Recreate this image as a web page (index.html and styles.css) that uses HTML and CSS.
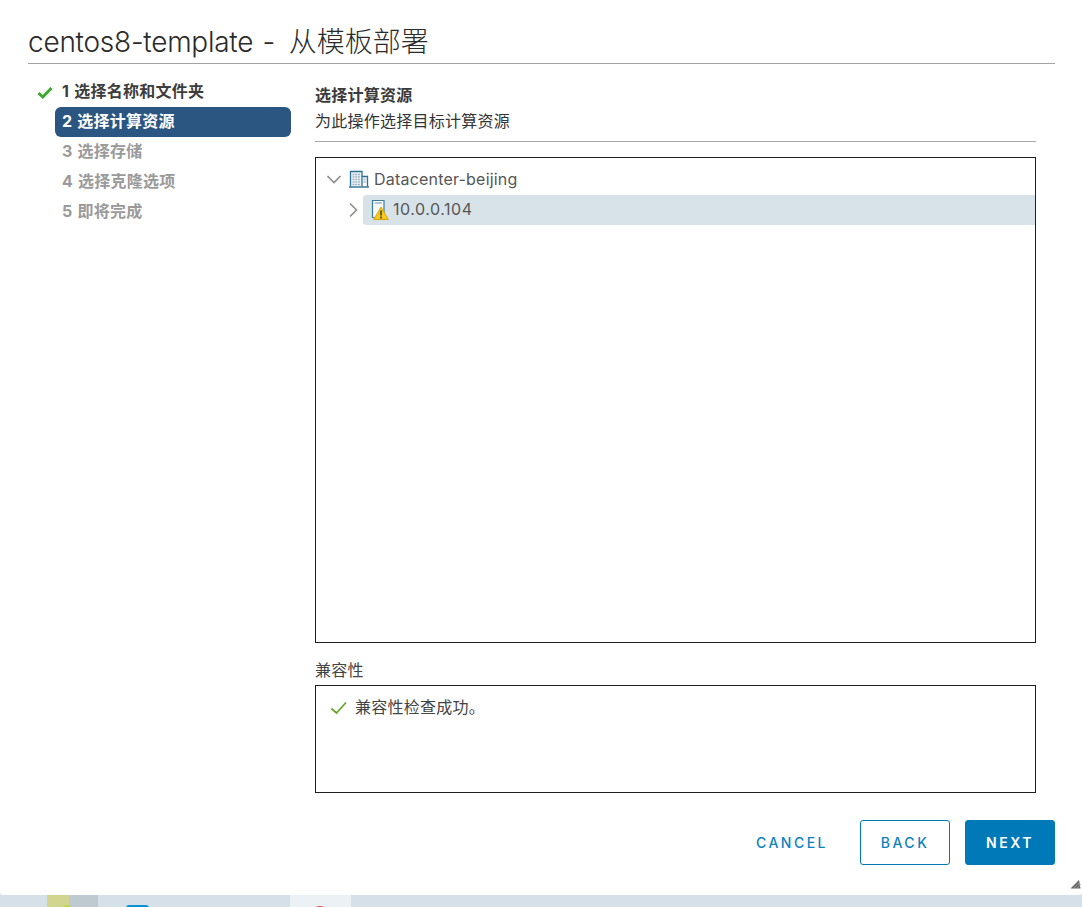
FILE: index.html
```html
<!DOCTYPE html>
<html lang="zh">
<head>
<meta charset="utf-8">
<title>centos8-template - 从模板部署</title>
<link rel="stylesheet" href="styles.css">
</head>
<body>
<div class="modal">
  <h1 class="title"><span class="title-name">centos8-template</span> <span class="title-dash">-</span> 从模板部署</h1>
  <div class="wizard">
    <nav class="steps">
      <div class="step done">
        <svg class="step-check" width="16" height="13" viewBox="0 0 16 13"><path d="M1.5 7 L5.8 11 L14.5 2" fill="none" stroke="#3dab2f" stroke-width="3"/></svg>
        <span class="step-label">1 选择名称和文件夹</span>
      </div>
      <div class="step active"><span class="step-label">2 选择计算资源</span></div>
      <div class="step off"><span class="step-label">3 选择存储</span></div>
      <div class="step off"><span class="step-label">4 选择克隆选项</span></div>
      <div class="step off"><span class="step-label">5 即将完成</span></div>
    </nav>
    <main class="content">
      <header class="head">
        <div class="head-title">选择计算资源</div>
        <div class="head-sub">为此操作选择目标计算资源</div>
      </header>
      <div class="tree">
        <div class="node root">
          <svg class="caret" width="16" height="16" viewBox="0 0 16 16"><path d="M1.5 5 L8 11.5 L14.5 5" fill="none" stroke="#8c8c8c" stroke-width="1.6"/></svg>
          <svg class="icon-dc" width="20" height="18" viewBox="0 0 20 18">
            <path d="M1.5 16.5 V1.5 H13 V16.5" fill="#f0f4f7" stroke="#2f6f92" stroke-width="1.3"/>
            <path d="M13 6.5 H18.5 V16.5" fill="#f0f4f7" stroke="#2f6f92" stroke-width="1.3"/>
            <path d="M0 17 H20" stroke="#2f6f92" stroke-width="1.4"/>
            <path d="M3.5 4.5 H11 M3.5 7 H11 M3.5 9.5 H11 M3.5 12 H11 M3.5 14.5 H11 M14.5 9.5 H17 M14.5 12 H17" stroke="#9fb6c6" stroke-width="1.3" stroke-dasharray="2 0.7"/>
          </svg>
          <span class="node-text">Datacenter-beijing</span>
        </div>
        <div class="node child">
          <svg class="caret" width="10" height="16" viewBox="0 0 10 16"><path d="M2 1.5 L8.5 8 L2 14.5" fill="none" stroke="#8c8c8c" stroke-width="1.6"/></svg>
          <div class="node-sel">
            <svg class="icon-host" width="20" height="22" viewBox="0 0 20 22">
              <path d="M2.5 1.5 H14 V18.5 H2.5 Z" fill="#f7f9fb" stroke="#3f7c9c" stroke-width="1.2"/>
              <path d="M4.5 4 H12" stroke="#9fb6c6" stroke-width="1.5"/>
              <path d="M11 8 L18.3 20.5 H3.7 Z" fill="#f7c81e" stroke="#d9a406" stroke-width="1" stroke-linejoin="round"/>
              <path d="M11 11.5 V16.5 M11 17.4 V19.4" stroke="#33302a" stroke-width="1.4"/>
            </svg>
            <span class="node-text host-text">10.0.0.104</span>
          </div>
        </div>
      </div>
      <div class="compat-label">兼容性</div>
      <div class="compat">
        <svg class="compat-check" width="18" height="14" viewBox="0 0 18 14"><path d="M1.5 7.5 L6.5 12 L16 1.5" fill="none" stroke="#62a62c" stroke-width="1.7"/></svg>
        <span>兼容性检查成功。</span>
      </div>
    </main>
  </div>
  <footer class="actions">
    <button class="btn link">CANCEL</button>
    <button class="btn outline">BACK</button>
    <button class="btn solid">NEXT</button>
  </footer>
  <svg class="resize" width="11" height="10" viewBox="0 0 11 10"><path d="M0.5 9.5 L9 1 L10.5 9.5 Z" fill="#6a6a6a"/><path d="M3 10 L10 3 M6 10 L11 5" stroke="#a0a0a0" stroke-width="0.7"/></svg>
</div>
<div class="backdrop">
  <div class="seg seg-a"></div>
  <div class="seg seg-b"></div>
  <div class="seg seg-c"></div>
  <span class="dot dot-green"></span>
  <span class="dot dot-blue"></span>
  <span class="dot dot-red"></span>
</div>
</body>
</html>
```
FILE: styles.css
```css
* { box-sizing: border-box; }
html, body { margin: 0; padding: 0; }
body {
  width: 1082px;
  height: 907px;
  overflow: hidden;
  background: #d5e0e8;
  font-family: "Inter", "Noto Sans CJK SC", sans-serif;
  color: #333;
}
.modal {
  position: relative;
  height: 895px;
  background: #fff;
  padding: 0 27px 0 28px;
  display: flex;
  flex-direction: column;
  border-radius: 0 0 3px 3px;
}
.title {
  margin: 0;
  height: 64px;
  padding-top: 24px;
  border-bottom: 1px solid #a3a3a3;
  font-size: 28px;
  font-weight: 300;
  line-height: 36px;
  word-spacing: 1.5px;
  color: #2b2b2b;
}
.title-name { letter-spacing: -0.25px; }
.title-dash { margin-right: 4px; }
.wizard { display: flex; }
.steps {
  width: 263px;
  padding: 13px 0 0 27px;
  flex: none;
}
.step {
  position: relative;
  height: 30px;
  display: flex;
  align-items: center;
  padding: 0 0 4px 7px;
  font-size: 16px;
  font-weight: 700;
  letter-spacing: 0.25px;
  word-spacing: 1px;
}
.step-check { position: absolute; left: -18px; top: 9px; }
.step.done { color: #3d3d3d; }
.step.active { background: #2b5681; color: #fff; border-radius: 6px; }
.step.off { color: #9a9a9a; }
.content {
  width: 721px;
  margin-left: 24px;
  flex: none;
}
.head {
  height: 78px;
  padding-top: 20px;
  border-bottom: 1px solid #a8a8a8;
  letter-spacing: 0.25px;
}
.head-title { font-size: 16px; font-weight: 700; line-height: 22px; color: #3a3a3a; }
.head-sub { font-size: 16px; line-height: 22px; margin-top: 4px; color: #333; }
.tree {
  margin-top: 15px;
  height: 486px;
  border: 1px solid #1f1f1f;
  padding-top: 7px;
}
.node { display: flex; align-items: center; height: 30px; }
.root { padding: 0 0 2px 10px; }
.child { padding-left: 32px; }
.caret { flex: none; }
.icon-dc { margin-left: 7px; flex: none; }
.node-text { font-size: 16px; letter-spacing: 0.2px; color: #565656; }
.host-text { letter-spacing: 0.55px; padding-bottom: 2px; }
.root .node-text { margin-left: 5px; }
.node-sel {
  flex: 1;
  height: 30px;
  margin-left: 5px;
  padding-left: 7px;
  display: flex;
  align-items: center;
  gap: 3px;
  background: #d8e3e9;
  border-radius: 3px 0 0 3px;
}
.compat-label { margin-top: 16px; font-size: 16px; letter-spacing: 0.25px; line-height: 22px; color: #444; }
.compat {
  margin-top: 4px;
  height: 108px;
  border: 1px solid #1f1f1f;
  padding: 10px 0 0 14px;
  display: flex;
  align-items: flex-start;
  gap: 7px;
  font-size: 16px;
  letter-spacing: 0.25px;
  line-height: 22px;
  color: #444;
}
.compat-check { margin-top: 5px; flex: none; }
.actions {
  margin-top: 27px;
  display: flex;
  justify-content: flex-end;
}
.btn {
  height: 45px;
  width: 90px;
  border-radius: 3px;
  font-family: "Inter", sans-serif;
  font-size: 14px;
  font-weight: 500;
  letter-spacing: 2.5px;
  padding: 0;
  border: 1px solid #0079b8;
}
.link { background: none; border-color: transparent; color: #0b82bd; margin-right: 23px; }
.outline { background: #fff; color: #0b82bd; margin-right: 15px; }
.solid { background: #0079b8; color: #fff; font-weight: 600; }
.resize { position: absolute; right: 1px; bottom: 6px; }
.backdrop {
  position: relative;
  height: 12px;
  overflow: hidden;
  background: #d5e0e8;
}
.seg { position: absolute; top: 0; height: 12px; }
.seg-a { left: 47px; width: 22px; background: #d2d590; }
.seg-b { left: 69px; width: 29px; background: #bfc9d0; }
.seg-c { left: 290px; width: 61px; background: #ebf1f4; }
.dot { position: absolute; border-radius: 50%; }
.dot-green { left: 62px; top: 10px; width: 10px; height: 10px; background: #b5dc3c; }
.dot-blue { left: 126px; top: 10px; width: 23px; height: 10px; border-radius: 3px; background: #0a93d6; }
.dot-red { left: 310px; top: 11px; width: 20px; height: 20px; background: #f0604d; }
```
